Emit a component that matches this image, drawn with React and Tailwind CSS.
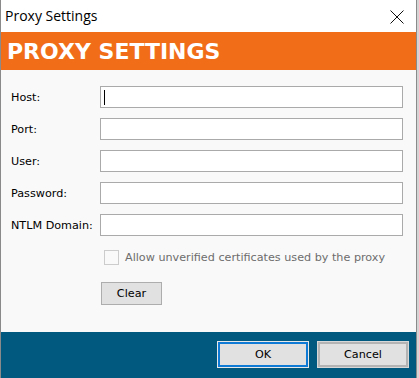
const fields = ["Host:", "Port:", "User:", "Password:", "NTLM Domain:"];

function App() {
  return (
    <div className="w-[419px] h-[378px] bg-[#d4d4d4] overflow-hidden">
      <div className="w-[417px] h-[378px] border-x border-[#8a8a8a] bg-[#f9f9f9] flex flex-col font-['DejaVu_Sans',sans-serif] text-[11.2px] text-black">
        {/* title bar */}
        <div className="h-[32px] shrink-0 bg-white flex items-center justify-between pl-[4px] pr-[12px]">
          <span className="font-['Open_Sans',sans-serif] text-[14px] leading-none text-black">Proxy Settings</span>
          <svg width="14" height="14" viewBox="0 0 14 14" className="mt-[1px]">
            <path d="M0.5 0.5 L13.5 13.5 M13.5 0.5 L0.5 13.5" stroke="#111" strokeWidth="1" fill="none" />
          </svg>
        </div>

        {/* banner */}
        <div className="h-[38px] shrink-0 bg-[#f26d18] pl-[6px] pt-[1px]">
          <span className="font-['DejaVu_Sans',sans-serif] font-bold text-[22px] leading-[37px] text-white">PROXY SETTINGS</span>
        </div>

        {/* form */}
        <div className="flex flex-col pt-[16px] pl-[10px]">
          <div className="flex flex-col gap-[10px]">
            {fields.map((f, i) => (
              <div key={f} className="flex items-center h-[22px]">
                <span className="w-[89px] leading-[22px] pt-[1px]">{f}</span>
                <div className="w-[303px] h-[22px] border border-[#aaaaaa] bg-white flex items-center pl-[3px]">
                  {i === 0 && <span className="w-[1px] h-[15px] bg-black" />}
                </div>
              </div>
            ))}
          </div>

          <div className="flex items-center h-[16px] mt-[13px] pl-[93px]">
            <span className="w-[15px] h-[15px] border border-[#cccccc] bg-[#f9f9f9]" />
            <span className="ml-[6px] text-[#6d6d6d] leading-none pt-[1px]">Allow unverified certificates used by the proxy</span>
          </div>

          <div className="mt-[17px] pl-[90px]">
            <button className="w-[61px] h-[23px] border border-[#adadad] bg-[#e1e1e1] flex items-center justify-center leading-none">
              Clear
            </button>
          </div>
        </div>

        {/* footer */}
        <div className="mt-auto h-[46px] shrink-0 bg-[#02597f] flex justify-end items-start gap-[10px] pt-[10px] pr-[8px]">
          <button className="w-[90px] h-[25px] border-2 border-[#0f7ad6] outline outline-1 outline-[#e8e8e8] -outline-offset-0 bg-[#e1e1e1] flex items-center justify-center leading-none">
            OK
          </button>
          <button className="w-[90px] h-[25px] border-2 border-[#b4b4b4] outline outline-1 outline-[#d8d8d8] bg-[#e1e1e1] flex items-center justify-center leading-none">
            Cancel
          </button>
        </div>
      </div>
    </div>
  );
}

export default App;
